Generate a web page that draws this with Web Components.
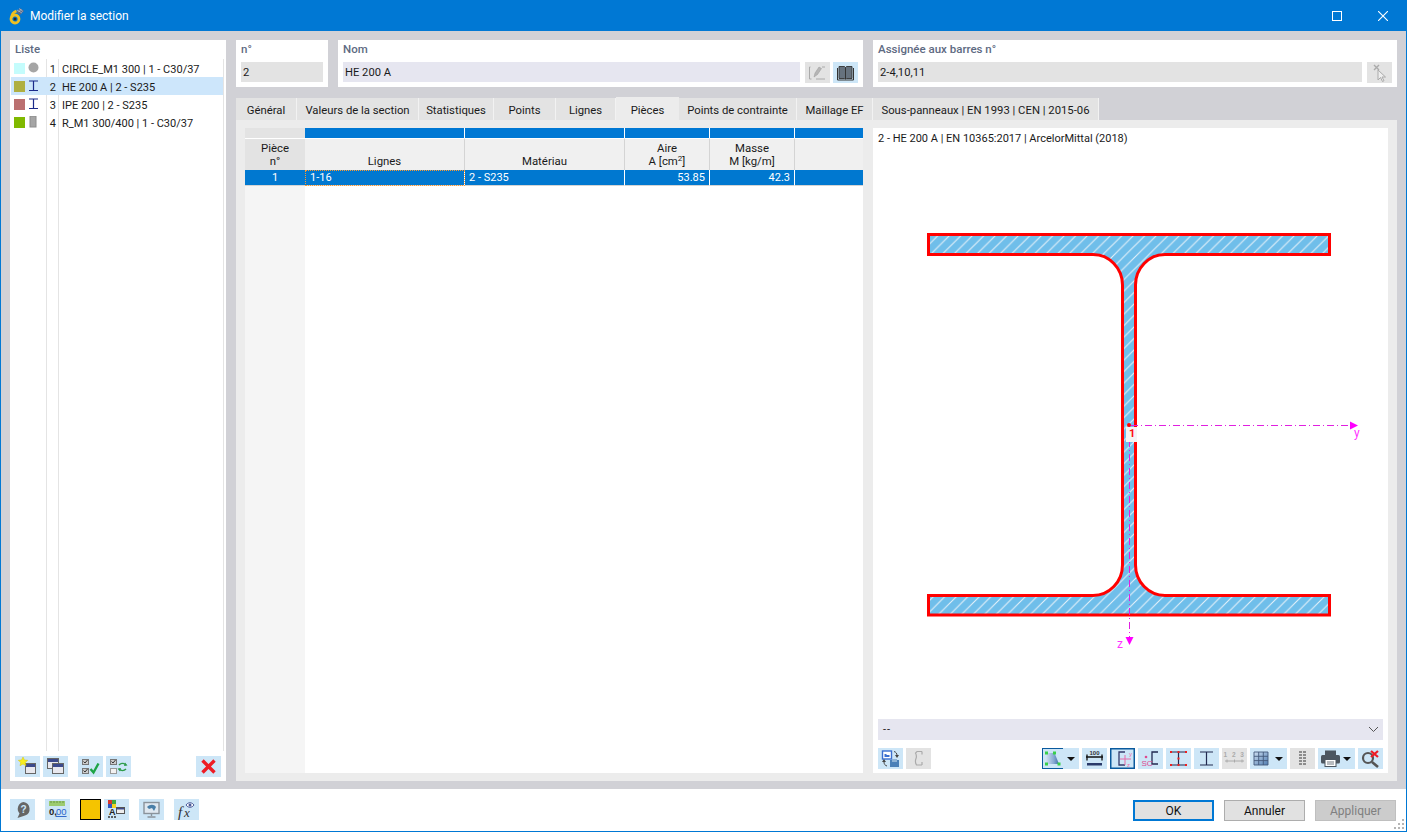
<!DOCTYPE html>
<html lang="fr">
<head>
<meta charset="utf-8">
<title>Modifier la section</title>
<style>
  html, body { margin: 0; padding: 0; background: #fff; }
  body { font: 12px Roboto, "Liberation Sans", sans-serif; color: #1a1a1a; }
</style>
</head>
<body>
<section-dialog></section-dialog>

<script>
const win = (x, y, w, h) => `<rect x="${x}" y="${y}" width="${w}" height="${h}" fill="#e8e8ee" stroke="#666" stroke-width="1"/><rect x="${x + .5}" y="${y + .5}" width="${w - 1}" height="3" fill="#3c4a8c"/>`

const ICONS = {
  new: `${win(10.500, 7.500, 10, 10)}<path d="M8 1l1.400 3 3.300.3-2.500 2.200.8 3.200L8 8l-3 1.700.8-3.200-2.500-2.200 3.300-.3z" fill="#f7ee20" stroke="#d8c400" stroke-width=".5"/>`,
  copy: `${win(4.500, 2.500, 11, 10)}${win(9.500, 7.500, 11, 10)}`,
  checks: `<rect x="4.500" y="3.500" width="6" height="5" fill="#ccc" stroke="#777"/><rect x="4.500" y="12.500" width="6" height="5" fill="#ccc" stroke="#777"/><path d="M5.500 5.500l1.500 1.500 2.500-3M5.500 14.500l1.500 1.500 2.500-3" fill="none" stroke="#333"/><path d="M12.500 13l3 3.500 5-9" fill="none" stroke="#1ea446" stroke-width="2.400"/>`,
  swap: `<rect x="4.500" y="3.500" width="6" height="5" fill="#ccc" stroke="#777"/><rect x="4.500" y="12.500" width="6" height="5" fill="#f2f2f2" stroke="#999"/><path d="M5.500 5.500l1.500 1.500 2.500-3" fill="none" stroke="#333"/><path d="M13 9c2-2 5-2 7 0M20 13c-2 2-5 2-7 0" fill="none" stroke="#2e9c4a" stroke-width="1.600"/><path d="M19 6.500l2.500 3-3.500.4zM14 15.500l-2.500-3 3.500-.4z" fill="#2e9c4a"/>`,
  del: `<path d="M6.500 4.500l12 12M18.500 4.500l-12 12" stroke="#ee1c25" stroke-width="3.400" fill="none"/>`,
  help: `<path d="M13.500 3a7 7 0 0 1 1.500 13.500L7.500 19l2-4.500A7 7 0 0 1 13.500 3z" fill="#666"/><text x="13.500" y="14" font-size="10" font-weight="700" text-anchor="middle" fill="#cde6fb" font-family="Liberation Sans">?</text>`,
  num: `<rect x="4" y="2" width="16" height="5" fill="#9ccb70"/><path d="M6 2v2M9 2v2M12 2v2M15 2v2M18 2v2" stroke="#5d8c3a" stroke-width=".8"/><text x="4" y="16" font-size="9.500" font-weight="700" fill="#222" font-family="Liberation Sans">0,</text><text x="11" y="16" font-size="9.500" fill="#2a62c9" font-family="Liberation Sans" text-decoration="underline">00</text>`,
  colors: `<rect x="4" y="1" width="4" height="4" fill="#d8352a"/><rect x="8" y="1" width="4" height="4" fill="#3ea83e"/><rect x="4" y="5" width="4" height="4" fill="#2f55c0"/><rect x="8" y="5" width="4" height="4" fill="#f3d21f"/><text x="5" y="16" font-size="9" font-weight="700" fill="#222" font-family="Liberation Sans">A</text><path d="M4 18h2M7 18h2M10 18h2" stroke="#333" stroke-width="1.500"/><rect x="12.500" y="8.500" width="8" height="6" fill="#eee" stroke="#555"/><rect x="13" y="9" width="7" height="1.500" fill="#3c4a8c"/>`,
  monitor: `<rect x="5" y="3.500" width="15" height="11" fill="#dfe8f0" stroke="#8a939b" stroke-width="1.400"/><path d="M8 8c3-3 7-3 9 0l-2 4-2-3-3 1z" fill="#4a7fa8"/><path d="M12.500 15v2M8.500 18h8" stroke="#8a939b" stroke-width="1.400"/>`,
  fx: `<text x="4" y="18" font-size="15" font-style="italic" fill="#333" font-family="Liberation Serif">f</text><text x="10" y="18" font-size="13" font-style="italic" fill="#333" font-family="Liberation Serif">x</text><path d="M12 6c2-3 6-3 8 0-2 3-6 3-8 0z" fill="#fff" stroke="#4a5a9a"/><circle cx="16" cy="6" r="1.500" fill="#4a5a9a"/>`,
  pencil: `<path d="M5.500 5h-1v12h2M20 17h-9" fill="none" stroke="#aaa"/><path d="M9 15l1-4 4-6 2.500 1.500-4 6z" fill="#b5b5b5" stroke="#999" stroke-width=".5"/><path d="M17 5h3" stroke="#aaa"/>`,
  book: `<path d="M6 4.500h5.500l1 1v11.500l-1-.5H6zM19 4.500h-5.500l-1 1v11.500l1-.5H19z" fill="#66727e" stroke="#333" stroke-width=".9"/><path d="M4.500 6v12h16V6" fill="none" stroke="#333"/>`,
  pick: `<path d="M7 3l5 5M12 3l-5 5" stroke="#aaa" stroke-width="1.400"/><path d="M11 8v10l2.500-2.500 2 4 1.500-.8-2-3.700h3.500z" fill="#eee" stroke="#aaa"/>`,
  views: `<rect x="4.500" y="3" width="9" height="8" fill="#fff" stroke="#3a6fd0" stroke-width="1.400"/><path d="M6.500 9V6h2v1h3v2z" fill="#3a6fd0"/><rect x="12" y="12" width="9" height="7" fill="#4a80b8"/><rect x="14" y="11" width="5" height="3" fill="#8eb3d6"/><path d="M16 3.500c2 .5 3 2 3 4M9 18c-2-.5-3-2-3-4" fill="none" stroke="#444"/><path d="M17 7h4l-2 3zM4 14h4l-2-3z" fill="#444"/>`,
  shape: `<path d="M16 3.500h-5l-1.500 1.500c1 2 1.500 3 .5 5.500-1 2.500-1 4 .5 6.500h5.500M16 3.500v3M16 14v3" fill="none" stroke="#aaa" stroke-width="1.200"/>`,
  trap: `<defs><linearGradient id="tg" x1="0" x2="1"><stop offset="0" stop-color="#d2e1f2"/><stop offset=".6" stop-color="#86a9d2"/><stop offset="1" stop-color="#3e6fa8"/></linearGradient></defs><path d="M4.500 5h8l4.500 11h-13z" fill="url(#tg)"/><g fill="#38d04a"><rect x="3" y="3.500" width="3" height="3"/><rect x="11" y="3.500" width="3" height="3"/><rect x="3" y="14.500" width="3" height="3"/><rect x="15.500" y="14.500" width="3" height="3"/></g>`,
  dim: `<text x="12.500" y="7" font-size="6" font-weight="700" text-anchor="middle" fill="#333" font-family="Liberation Sans">100</text><path d="M4 9h17M5 6.500v6M20 6.500v6" stroke="#111" stroke-width="1.300" fill="none"/><rect x="5" y="15" width="15" height="2.500" fill="#2a3a6a"/>`,
  axes: `<path d="M15 4H9v13h6" fill="none" stroke="#333a6a" stroke-width="1.300"/><path d="M10 11h11M15 7v10" stroke="#e86aa8" stroke-width="1" fill="none"/><text x="19" y="8" font-size="6" fill="#e86aa8" font-family="Liberation Sans">y</text><text x="17" y="19" font-size="6" fill="#e86aa8" font-family="Liberation Sans">z</text>`,
  sc: `<path d="M20 4h-6v12h6" fill="none" stroke="#222a50" stroke-width="1.300"/><circle cx="8" cy="9" r="1.300" fill="#e04a90"/><text x="3.500" y="18" font-size="8" fill="#e04a90" font-family="Liberation Sans">SC</text>`,
  ired: `<path d="M12.500 4v13" fill="none" stroke="#222a50" stroke-width="1.200"/><path d="M5 4h15M5 17h15" stroke="#222a50" stroke-width="1"/><g fill="#ee2020"><rect x="4" y="3" width="2" height="2"/><rect x="11.500" y="3" width="2" height="2"/><rect x="19" y="3" width="2" height="2"/><rect x="4" y="16" width="2" height="2"/><rect x="11.500" y="16" width="2" height="2"/><rect x="19" y="16" width="2" height="2"/><rect x="11.500" y="9.500" width="2" height="2"/></g>`,
  inavy: `<path d="M6 4h13M6 17h13M12.500 4v13" fill="none" stroke="#222a50" stroke-width="1.200"/>`,
  ruler: `<text x="12.500" y="9" font-size="6.500" font-weight="700" text-anchor="middle" fill="#aaa" letter-spacing="1.500" font-family="Liberation Sans">1 2 3</text><path d="M3 13h19M5 11.500v3M12.500 11.500v3M20 11.500v3" stroke="#aaa" fill="none"/>`,
  grid: `<defs><linearGradient id="gg" x1="0" x2="1" y1="0" y2="1"><stop offset="0" stop-color="#cfe0f2"/><stop offset="1" stop-color="#4f7cb0"/></linearGradient></defs><rect x="4" y="4" width="14" height="13" fill="url(#gg)"/><path d="M4 4h14v13H4zM4 8.300h14M4 12.600h14M8.700 4v13M13.300 4v13" fill="none" stroke="#44597a" stroke-width=".9"/>`,
  rows: `<g fill="#8d8d8d"><rect x="9" y="3" width="3" height="2"/><rect x="13" y="3" width="3" height="2"/><rect x="9" y="6" width="3" height="2"/><rect x="13" y="6" width="3" height="2"/><rect x="9" y="9" width="3" height="2"/><rect x="13" y="9" width="3" height="2"/><rect x="9" y="12" width="3" height="2"/><rect x="13" y="12" width="3" height="2"/><rect x="9" y="15" width="3" height="2"/><rect x="13" y="15" width="3" height="2"/></g>`,
  print: `<rect x="7" y="2.500" width="11" height="5" fill="#4c5660"/><rect x="3" y="7" width="19" height="8.500" rx="1.500" fill="#4c5660"/><rect x="7" y="11.500" width="11" height="7" fill="#fff" stroke="#4c5660"/><path d="M9 14h7M9 16h7" stroke="#4c5660" stroke-width=".8"/>`,
  zoomx: `<circle cx="10" cy="10" r="5" fill="none" stroke="#555" stroke-width="2.200"/><path d="M14 14l6 5" stroke="#555" stroke-width="2.600"/><path d="M13 3l7 6M20 3l-7 6" stroke="#ee1c25" stroke-width="2.300"/>`
}

class ToolBtn extends HTMLElement {
  constructor() {
    super()
    this.attachShadow({ mode: 'open' })
  }

  connectedCallback() {
    const icon = ICONS[this.getAttribute('icon')] || ''
    const drop = this.hasAttribute('drop')
    this.shadowRoot.innerHTML = `
      <style>
      :host { display: block; flex: none; width: ${drop ? 37 : 25}px; height: 21px; background: #cde6f7; position: relative; }
      :host([disabled]) { background: #e3e3e3; }
      :host([active]) .face { box-shadow: inset 0 0 0 1.500px #0a5a9e; }
      :host([open]) .face { border: solid #0a5a9e; border-width: 1.500px 0 1.500px 1.500px; box-sizing: border-box; width: 21px; overflow: hidden; }
      :host([open]) svg { margin: -1.500px 0 0 -1.500px; }
      .face { display: block; width: 25px; height: 21px; }
      svg { display: block; }
      .arrow { position: absolute; right: 4px; top: 9px; width: 0; height: 0; border: 4px solid transparent; border-top: 4px solid #111; border-bottom: 0; }
      </style>
      <div class="face"><svg width="25" height="21" viewBox="0 0 25 21">${icon}</svg></div>
      ${drop ? '<span class="arrow"></span>' : ''}
    `
  }
}

class TitleBar extends HTMLElement {
  constructor() {
    super()
    this.attachShadow({ mode: 'open' })
  }

  connectedCallback() {
    this.shadowRoot.innerHTML = `
      <style>
      :host { display: flex; align-items: center; height: 30px; background: #0078d4; color: #fff; padding-left: 8px; }
      .logo { margin-right: 5px; }
      .label { flex: 1; font-size: 12px; }
      .ctl { width: 46px; height: 30px; display: flex; align-items: center; justify-content: center; }
      svg { display: block; }
      </style>
      <svg class="logo" width="16" height="18" viewBox="0 0 16 18">
        <path d="M7 5l4-4 4 3-4 4z" fill="#5b6a88"/>
        <path d="M8 3l5 3M10 1.500l4 3M9.500 5l3-3" stroke="#c9d2da" stroke-width=".6"/>
        <circle cx="6" cy="12" r="4" fill="none" stroke="#f0c020" stroke-width="2.800"/>
        <path d="M2.500 11c0-4 2-6 5-7" fill="none" stroke="#f0c020" stroke-width="2.400"/>
        <circle cx="6" cy="12" r="1.500" fill="#2a2a2a"/>
      </svg>
      <span class="label"><slot></slot></span>
      <span class="ctl"><svg width="10" height="10"><rect x=".5" y=".5" width="9" height="9" fill="none" stroke="#fff"/></svg></span>
      <span class="ctl"><svg width="10" height="10"><path d="M0 0l10 10M10 0L0 10" stroke="#fff" stroke-width="1.100"/></svg></span>
    `
  }
}

class SectionList extends HTMLElement {
  constructor() {
    super()
    this.attachShadow({ mode: 'open' })
  }

  connectedCallback() {
    const rows = [
      ['#c4fcfc', 'circle', '1', 'CIRCLE_M1 300 | 1 - C30/37'],
      ['#afaf41', 'i', '2', 'HE 200 A | 2 - S235'],
      ['#bb7070', 'i', '3', 'IPE 200 | 2 - S235'],
      ['#80b900', 'rect', '4', 'R_M1 300/400 | 1 - C30/37']
    ]
    const shape = {
      circle: '<circle cx="5.500" cy="5.500" r="5" fill="#a5a5a5"/>',
      i: '<path d="M1 1h9M1 10.500h9M5.500 1v9.500" fill="none" stroke="#1b2a8a" stroke-width="1.200"/>',
      rect: '<rect x="2" y="0" width="6" height="11" fill="#a5a5a5" stroke="#8c8c8c"/>'
    }
    this.shadowRoot.innerHTML = `
      <style>
      :host { display: flex; flex-direction: column; background: #fff; padding: 0 1px; height: 100%; box-sizing: border-box; }
      h3 { margin: 0; height: 19px; padding: 2px 0 0 4px; box-sizing: border-box; font-size: 11.500px; line-height: 14px; font-weight: 500; color: #5e6a82; }
      .body { flex: 1; margin-right: 1px; border-right: 1px solid #e4e4e4;
        background: linear-gradient(#e4e4e4, #e4e4e4) 35px 0 / 1px 100% no-repeat, linear-gradient(#e4e4e4, #e4e4e4) 47px 0 / 1px 100% no-repeat; }
      .row { display: grid; grid-template-columns: 14px 21px 12px 1fr; height: 18px; align-items: center; white-space: nowrap; font-size: 11px; }
      .row.sel { background: #cde6fb; }
      .sw { width: 11px; height: 11px; margin-left: 3px; }
      .ic { margin-left: 3px; display: block; }
      .n { text-align: right; padding: 2px 2px 0 0; }
      .t { padding: 2px 0 0 4px; }
      .tools { display: flex; gap: 3px; padding: 5px 4px 4px; }
      .sp { width: 4px; }
      .end { margin-left: auto; }
      </style>
      <h3>Liste</h3>
      <div class="body">
        ${rows.map((r, i) => `
          <div class="row ${i === 1 ? 'sel' : ''}">
            <div class="sw" style="background:${r[0]}"></div>
            <svg class="ic" width="11" height="12" viewBox="0 0 11 12">${shape[r[1]]}</svg>
            <span class="n">${r[2]}</span>
            <span class="t">${r[3]}</span>
          </div>`).join('')}
      </div>
      <div class="tools">
        <tool-btn icon="new"></tool-btn>
        <tool-btn icon="copy"></tool-btn>
        <span class="sp"></span>
        <tool-btn icon="checks"></tool-btn>
        <tool-btn icon="swap"></tool-btn>
        <tool-btn class="end" icon="del"></tool-btn>
      </div>
    `
  }
}

class FieldCard extends HTMLElement {
  constructor() {
    super()
    this.attachShadow({ mode: 'open' })
  }

  connectedCallback() {
    const fill = this.getAttribute('fill') || '#e3e3e3'
    this.shadowRoot.innerHTML = `
      <style>
      :host { display: block; background: #fff; height: 47px; padding: 0 5px; box-sizing: border-box; }
      .lbl { height: 22px; padding-top: 2px; box-sizing: border-box; font-size: 11.500px; line-height: 14px; font-weight: 500; color: #5e6a82; }
      .line { display: flex; gap: 3px; }
      .val { flex: 1; height: 20px; line-height: 22px; padding-left: 2px; background: ${fill}; font-size: 11.200px; }
      .val.has-btn { margin-right: 2px; }
      </style>
      <div class="lbl">${this.getAttribute('label')}</div>
      <div class="line"><div class="val ${this.children.length ? 'has-btn' : ''}">${this.getAttribute('value')}</div><slot></slot></div>
    `
  }
}

class TabBar extends HTMLElement {
  constructor() {
    super()
    this.attachShadow({ mode: 'open' })
  }

  connectedCallback() {
    const tabs = [
      ['Général', 61], ['Valeurs de la section', 122], ['Statistiques', 75], ['Points', 62], ['Lignes', 60],
      ['Pièces', 63], ['Points de contrainte', 118], ['Maillage EF', 76], ['Sous-panneaux | EN 1993 | CEN | 2015-06', 226]
    ]
    this.shadowRoot.innerHTML = `
      <style>
      :host { display: flex; align-items: flex-end; height: 23px; font-size: 11.300px; }
      .tab { box-sizing: border-box; height: 22px; line-height: 25px; text-align: center; background: #e3e3e3; border-right: 1px solid #f2f2f2; white-space: nowrap; }
      .tab.on { height: 23px; line-height: 27px; background: #ececec; border-right: 0; }
      </style>
      ${tabs.map((t, i) => `<div class="tab ${i === 5 ? 'on' : ''}" style="width:${t[1]}px">${t[0]}</div>`).join('')}
    `
  }
}

class PartsTable extends HTMLElement {
  constructor() {
    super()
    this.attachShadow({ mode: 'open' })
  }

  connectedCallback() {
    this.shadowRoot.innerHTML = `
      <style>
      :host { display: grid; grid-template-columns: 60px 160px 160px 85px 85px 68px; grid-template-rows: 10px 32px 16px 1fr; background: #fff; line-height: 13px; font-size: 11px; }
      div { box-sizing: border-box; }
      .band { background: #0078d4; border-right: 1px solid #fff; }
      .band.first { background: #e3e3e3; border-right: 0; }
      .band.last, .head.last, .cell.last { border-right: 0; }
      .head { background: #f0f0f0; border-right: 1px solid #d4d4d4; border-top: 1px solid #fff; display: flex; align-items: flex-end; justify-content: center; text-align: center; padding-bottom: 2px; font-size: 11.400px; }
      .head.first { background: #e3e3e3; border-right: 0; }
      sup { font-size: 8px; line-height: 0; vertical-align: 4px; }
      .cell { background: #0078d0; color: #fff; border-right: 1px solid #fff; border-bottom: 1px solid #d4d4d4; line-height: 16px; padding: 0 4px; white-space: nowrap; }
      .cell.idx { text-align: center; border-right: 0; }
      .cell.r { text-align: right; }
      .cell.focus { padding-left: 5px; outline: 1px dotted #ff9a2e; outline-offset: -1px; }
      .side { background: #f5f5f5; }
      .rest { grid-column: 2 / -1; background: #fff; }
      </style>
      <div class="band first"></div><div class="band"></div><div class="band"></div><div class="band"></div><div class="band"></div><div class="band last"></div>
      <div class="head first"><span>Pièce<br>n°</span></div>
      <div class="head"><span>Lignes</span></div>
      <div class="head"><span>Matériau</span></div>
      <div class="head"><span>Aire<br>A [cm<sup>2</sup>]</span></div>
      <div class="head"><span>Masse<br>M [kg/m]</span></div>
      <div class="head last"></div>
      <div class="cell idx">1</div>
      <div class="cell focus">1-16</div>
      <div class="cell">2 - S235</div>
      <div class="cell r">53.85</div>
      <div class="cell r">42.3</div>
      <div class="cell last"></div>
      <div class="side"></div><div class="rest"></div>
    `
  }
}

class SectionView extends HTMLElement {
  constructor() {
    super()
    this.attachShadow({ mode: 'open' })
  }

  connectedCallback() {
    // page coordinates in the viewBox, the beam is easier to read like that
    const beam = 'M928.500 234.500H1329.500V254.500H1165A29.500 30.500 0 0 0 1135.500 285V565A29.500 30.500 0 0 0 1165 595.500H1329.500V615H928.500V595.500H1093A29.500 30.500 0 0 0 1122.500 565V285A29.500 30.500 0 0 0 1093 254.500H928.500Z'
    this.shadowRoot.innerHTML = `
      <style>
      :host { display: flex; flex-direction: column; background: #fff; height: 100%; font-size: 11px; }
      .cap { height: 22px; padding: 4px 0 0 5px; box-sizing: border-box; white-space: nowrap; }
      svg.draw { display: block; flex: 1; min-height: 0; width: 515px; }
      .combo { margin: 4px 5px 0; height: 21px; line-height: 21px; background: #e6e6f0; padding-left: 5px; display: flex; justify-content: space-between; align-items: center; }
      .combo span { letter-spacing: 1px; }
      .combo svg { margin-right: 4px; }
      .tools { display: flex; gap: 3px; padding: 8px 5px 4px; }
      .gap { flex: 1; }
      </style>
      <div class="cap">2 - HE 200 A | EN 10365:2017 | ArcelorMittal (2018)</div>
      <svg class="draw" viewBox="873 150 515 565" xmlns="http://www.w3.org/2000/svg">
        <defs>
          <pattern id="hatch" width="11.500" height="11.500" patternUnits="userSpaceOnUse" patternTransform="translate(928 234)">
            <rect width="11.500" height="11.500" fill="#6fbeea"/>
            <path d="M-1 12.500L12.500 -1M-4 4L4 -4M7.500 15.500L15.500 7.500" stroke="#e4f1fa" stroke-width="1.100"/>
          </pattern>
        </defs>
        <path d="${beam}" fill="url(#hatch)" stroke="#ff0000" stroke-width="3"/>
        <path d="M1131 425.500H1352" stroke="#e020e0" stroke-dasharray="7 3 1 3" fill="none"/>
        <path d="M1129.500 426V640" stroke="#e020e0" stroke-dasharray="7 3 1 3" fill="none"/>
        <path d="M1350 421.500l8 4-8 4zM1125.500 637l4 8 4-8z" fill="#ff00ff"/>
        <rect x="1126" y="427" width="11" height="15" fill="#f4f4f4"/>
        <circle cx="1129" cy="425" r="2" fill="#ff0000"/>
        <text x="1129" y="437" font-size="11" font-weight="700" fill="#ff1010" font-family="Roboto">1</text>
        <text x="1354" y="437" font-size="12" fill="#ff33ff" font-family="Roboto">y</text>
        <text x="1117" y="648" font-size="12" fill="#ff33ff" font-family="Roboto">z</text>
      </svg>
      <div class="combo"><span>--</span><svg width="11" height="7" viewBox="0 0 11 7"><path d="M1 1l4.500 4.500L10 1" fill="none" stroke="#555"/></svg></div>
      <div class="tools">
        <tool-btn icon="views"></tool-btn>
        <tool-btn icon="shape" disabled></tool-btn>
        <span class="gap"></span>
        <tool-btn icon="trap" drop open></tool-btn>
        <tool-btn icon="dim"></tool-btn>
        <tool-btn icon="axes" active></tool-btn>
        <tool-btn icon="sc"></tool-btn>
        <tool-btn icon="ired"></tool-btn>
        <tool-btn icon="inavy"></tool-btn>
        <tool-btn icon="ruler" disabled></tool-btn>
        <tool-btn icon="grid" drop></tool-btn>
        <tool-btn icon="rows" disabled></tool-btn>
        <tool-btn icon="print" drop></tool-btn>
        <tool-btn icon="zoomx"></tool-btn>
      </div>
    `
  }
}

class DialogFooter extends HTMLElement {
  constructor() {
    super()
    this.attachShadow({ mode: 'open' })
  }

  connectedCallback() {
    this.shadowRoot.innerHTML = `
      <style>
      :host { display: flex; height: 42px; box-sizing: border-box; padding: 10px 10px 0 9px; background: #fff; position: relative; }
      .left { display: flex; gap: 10px; }
      .color { display: block; width: 21px; height: 21px; box-sizing: border-box; background: #f5c400; border: 1px solid #000; margin-right: -7px; }
      .right { margin-left: auto; display: flex; gap: 10px; padding-top: 1px; }
      button { width: 81px; height: 21px; box-sizing: border-box; margin: 0; padding: 0; background: #e1e1e1; border: 1px solid #adadad; font: inherit; color: #111; }
      button.ok { border: 2px solid #0078d4; }
      button[disabled] { background: #ccc; border-color: #bfbfbf; color: #7f7f7f; }
      .grip { position: absolute; right: 1px; bottom: 1px; }
      </style>
      <div class="left">
        <tool-btn icon="help"></tool-btn>
        <tool-btn icon="num"></tool-btn>
        <span class="color"></span>
        <tool-btn icon="colors"></tool-btn>
        <tool-btn icon="monitor"></tool-btn>
        <tool-btn icon="fx"></tool-btn>
      </div>
      <div class="right">
        <button class="ok">OK</button>
        <button>Annuler</button>
        <button disabled>Appliquer</button>
      </div>
      <svg class="grip" width="11" height="11"><g fill="#b5b5b5"><rect x="8" y="0" width="2" height="2"/><rect x="4" y="4" width="2" height="2"/><rect x="8" y="4" width="2" height="2"/><rect x="0" y="8" width="2" height="2"/><rect x="4" y="8" width="2" height="2"/><rect x="8" y="8" width="2" height="2"/></g></svg>
    `
  }
}

class SectionDialog extends HTMLElement {
  constructor() {
    super()
    this.attachShadow({ mode: 'open' })
  }

  connectedCallback() {
    this.shadowRoot.innerHTML = `
      <style>
      :host { display: flex; flex-direction: column; width: 1407px; height: 832px; box-sizing: border-box; border: 1px solid #0078d4; background: #d1d1d6; overflow: hidden; }
      .main { flex: 1; min-height: 0; display: grid; grid-template-columns: 216px 1fr; gap: 10px; padding: 9px 9px 8px 9px; }
      .right { display: flex; flex-direction: column; min-width: 0; }
      .fields { display: grid; grid-template-columns: 92px 525px 1fr; gap: 10px; margin-bottom: 10px; }
      .page { flex: 1; min-height: 0; display: grid; grid-template-columns: 618px 515px; gap: 10px; padding: 8px 8px 8px 9px; background: #ececec; }
      </style>
      <title-bar>Modifier la section</title-bar>
      <div class="main">
        <section-list></section-list>
        <div class="right">
          <div class="fields">
            <field-card label="n°" value="2"></field-card>
            <field-card label="Nom" value="HE 200 A" fill="#e6e6f0">
              <tool-btn icon="pencil" disabled></tool-btn>
              <tool-btn icon="book"></tool-btn>
            </field-card>
            <field-card label="Assignée aux barres n°" value="2-4,10,11">
              <tool-btn icon="pick" disabled></tool-btn>
            </field-card>
          </div>
          <tab-bar></tab-bar>
          <div class="page">
            <parts-table></parts-table>
            <section-view></section-view>
          </div>
        </div>
      </div>
      <dialog-footer></dialog-footer>
    `
  }
}

customElements.define('tool-btn', ToolBtn)
customElements.define('title-bar', TitleBar)
customElements.define('section-list', SectionList)
customElements.define('field-card', FieldCard)
customElements.define('tab-bar', TabBar)
customElements.define('parts-table', PartsTable)
customElements.define('section-view', SectionView)
customElements.define('dialog-footer', DialogFooter)
customElements.define('section-dialog', SectionDialog)
</script>
</body>
</html>
